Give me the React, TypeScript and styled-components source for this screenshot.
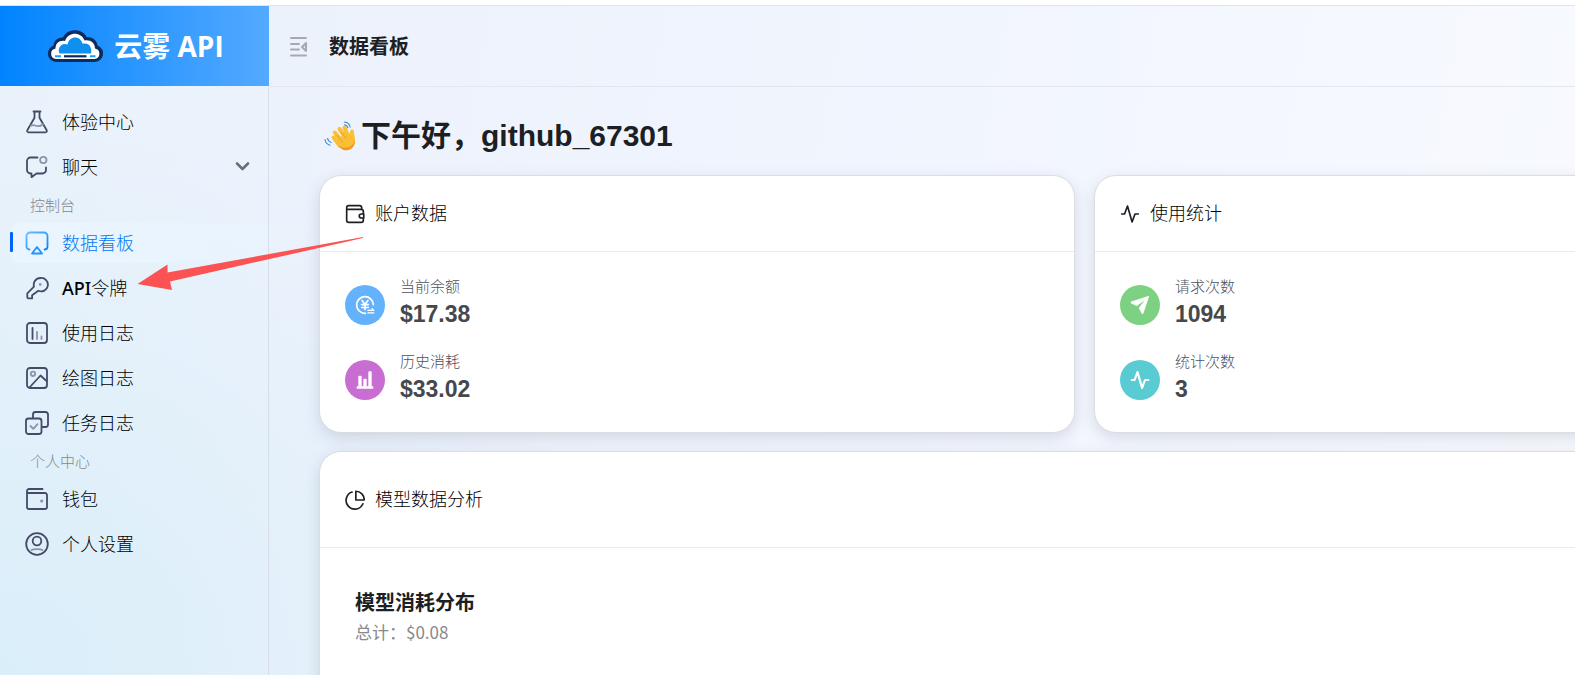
import React from "react";
import styled, { createGlobalStyle, css } from "styled-components";

const GlobalStyle = createGlobalStyle`
  * { box-sizing: border-box; }
  body {
    margin: 0;
    background: #fff;
    color: #1c1f23;
    font-family: "Noto Sans", "Noto Sans CJK SC", sans-serif;
    overflow: hidden;
  }
  h1, h2, h3, p, ul, dl, dd, dt { margin: 0; padding: 0; font-weight: inherit; }
`;

const Page = styled.div`
  position: relative;
  height: 100vh;
  display: grid;
  grid-template-columns: 269px minmax(0, 1fr);
  grid-template-rows: auto minmax(0, 1fr);
  border-top: 5px solid #fff;
  background:
    radial-gradient(ellipse 620px 560px at 0% 100%, #daeef9 0%, rgba(220, 238, 250, 0) 100%),
    linear-gradient(100deg, #e9f2fb 0%, #ebf2fc 16%, #eef2fc 24%, #f1f5fe 55%, #f8fafe 100%);
`;

const Brand = styled.a`
  display: flex;
  align-items: center;
  justify-content: center;
  align-self: start;
  gap: 11px;
  height: 81px;
  padding-left: 2px;
  border-top: 1px solid #dfe3ea;
  background: linear-gradient(90deg, #0084ff, #54a9ff);
  color: #fff;
  font-family: "Open Sans", "Noto Sans CJK SC", sans-serif;
  font-size: 28px;
  font-weight: 700;
  line-height: 36px;
  text-decoration: none;
`;

const TopBar = styled.header`
  display: flex;
  align-items: center;
  gap: 20px;
  height: 82px;
  padding: 1px 0 0 19px;
  border-top: 1px solid #dfe3ea;
  border-bottom: 1px solid #e3e6ef;
`;

const IconButton = styled.button`
  display: flex;
  padding: 0;
  border: 0;
  background: none;
  color: #a7a9b1;
`;

const TopTitle = styled.h1`
  font-size: 20px;
  font-weight: 700;
  line-height: 28px;
`;

const Sidebar = styled.nav`
  display: flex;
  flex-direction: column;
  gap: 5px;
  padding: 15px 0 20px 10px;
  border-right: 1px solid #d8dee9;
`;

const NavLabel = styled.div`
  height: 26px;
  padding: 2px 0 0 20px;
  color: #85888e;
  font-size: 15px;
  font-weight: 300;
  line-height: 22px;
`;

const NavItem = styled.a<{ $active?: boolean }>`
  position: relative;
  display: flex;
  align-items: center;
  gap: 13px;
  height: 40px;
  padding: 0 15px;
  border-radius: 10px 0 0 10px;
  color: #000;
  font-size: 18px;
  font-weight: 300;
  line-height: 24px;
  text-decoration: none;
  ${(p) => p.$active && css`
    background: linear-gradient(90deg, #eaf5ff, rgba(234, 245, 255, 0.5));
    color: #0077f5;
    &::before {
      content: "";
      position: absolute;
      left: 0;
      top: 9px;
      width: 3px;
      height: 20px;
      border-radius: 1px;
      background: #0064fa;
    }
  `}
`;

const NavText = styled.span`
  flex: 1;
`;

const Latin = styled.span`
  font-weight: 500;
`;

const Main = styled.main`
  overflow: hidden;
  padding: 26px 51px 0 50px;
`;

const Greeting = styled.h2`
  display: flex;
  align-items: center;
  gap: 5px;
  padding-left: 5px;
  margin-bottom: 16px;
  font-family: "Liberation Sans", "Noto Sans CJK SC", sans-serif;
  font-size: 30px;
  font-weight: 700;
  line-height: 46px;
`;

const Cards = styled.div`
  display: grid;
  grid-template-columns: repeat(2, 48vw);
  gap: 18px 19px;
`;

const Card = styled.section<{ $wide?: boolean }>`
  border: 1px solid #dadee3;
  border-radius: 22px;
  background: #fff;
  box-shadow: 0 5px 15px rgba(80, 90, 110, 0.18);
  ${(p) => p.$wide && css`
    grid-column: 1 / -1;
  `}
`;

const CardHeader = styled.div<{ $tall?: boolean }>`
  display: flex;
  align-items: center;
  gap: 10px;
  height: ${(p) => (p.$tall ? 96 : 76)}px;
  padding: 0 25px;
  border-bottom: 1px solid #e8eaec;
`;

const CardTitle = styled.h3`
  padding-bottom: 2px;
  color: #000;
  font-size: 18px;
  font-weight: 300;
  line-height: 24px;
`;

const Stats = styled.dl`
  display: flex;
  flex-direction: column;
  gap: 19px;
  padding: 23px 25px 26px;
`;

const Stat = styled.div`
  display: grid;
  grid-template-columns: 40px 1fr;
  column-gap: 15px;
`;

const Avatar = styled.span<{ $color: string }>`
  grid-row: 1 / 3;
  align-self: center;
  display: flex;
  align-items: center;
  justify-content: center;
  width: 40px;
  height: 40px;
  margin-top: 4px;
  border-radius: 50%;
  background: ${(p) => p.$color};
  color: #fff;
`;

const StatLabel = styled.dt`
  color: #4c525d;
  font-size: 15px;
  font-weight: 300;
  line-height: 22px;
`;

const StatValue = styled.dd`
  color: #45484c;
  font-family: "Liberation Sans", sans-serif;
  font-size: 23px;
  font-weight: 700;
  line-height: 34px;
`;

const Chart = styled.div`
  min-height: 400px;
  padding: 40px 35px;
`;

const ChartTitle = styled.h3`
  font-size: 20px;
  font-weight: 700;
  line-height: 30px;
`;

const ChartTotal = styled.p`
  color: #88898c;
  font-family: "Noto Sans CJK SC", sans-serif;
  font-size: 17px;
  line-height: 28px;
`;

const Pointer = styled.svg`
  position: absolute;
  left: 137px;
  top: 231px;
  pointer-events: none;
`;

type P = { children: React.ReactNode };

const NavIcon = ({ children }: P) => (
  <svg width="24" height="24" viewBox="0 0 24 24" fill="none" stroke="#454a66" strokeWidth="1.800" strokeLinecap="round" strokeLinejoin="round" aria-hidden="true">
    {children}
  </svg>
);

const SOFT = "#8b93a8";

const icons = {
  flask: (
    <NavIcon>
      <path d="M8.500 1.500h7M9.500 1.500v6.200L2.300 20.200c-.5 1 .1 2.100 1.200 2.100h17c1.100 0 1.700-1.100 1.200-2.100L14.500 7.700V1.500" />
      <path d="M5.500 16c2-1.800 4.500-.6 6.500 0s4-.2 6-1.800" stroke={SOFT} />
    </NavIcon>
  ),
  chat: (
    <NavIcon>
      <path d="M12.500 2.500H5.500A3.500 3.500 0 0 0 2 6v9a3.500 3.500 0 0 0 3.500 3.500H6.500v3.700l5-3.700h6a3.500 3.500 0 0 0 3.500-3.500V12.500" />
      <circle cx="18.300" cy="5" r="3.200" stroke={SOFT} />
    </NavIcon>
  ),
  board: (
    <NavIcon>
      <defs>
        <linearGradient id="boardStroke" x1="0" y1="0" x2="1" y2="1">
          <stop offset="0" stopColor="#6cbcff" />
          <stop offset="1" stopColor="#0084ff" />
        </linearGradient>
      </defs>
      <g stroke="url(#boardStroke)">
        <path d="M4.500 18.500a3 3 0 0 1-3-3v-10.500a3.500 3.500 0 0 1 3.500-3.500h14a3.500 3.500 0 0 1 3.500 3.500v10.500a3 3 0 0 1-3 3" />
      </g>
      <path d="M12 16l5 6.500H7z" stroke="#1f93ff" />
    </NavIcon>
  ),
  key: (
    <NavIcon>
      <path d="M15.500 2a6.700 6.700 0 0 0-6.500 8.600L2.300 17.300v3.900c0 .7.500 1.200 1.200 1.200h3.600v-3.200l6.200-4.500a6.700 6.700 0 1 0 2.200-12.700z" />
      <circle cx="15.200" cy="8.500" r="0.500" fill={SOFT} stroke={SOFT} />
    </NavIcon>
  ),
  log: (
    <NavIcon>
      <rect x="2" y="2" width="20" height="20" rx="3" />
      <path d="M7.500 7v11" />
      <path d="M12 11v7M16.500 15.500v2.500" stroke={SOFT} />
    </NavIcon>
  ),
  image: (
    <NavIcon>
      <rect x="2" y="2" width="20" height="20" rx="3" />
      <path d="M4.500 21.500L15.500 9.500 21.500 15" />
      <circle cx="8" cy="7.800" r="2.200" stroke={SOFT} />
    </NavIcon>
  ),
  task: (
    <NavIcon>
      <path d="M8 7V3.500A2.500 2.500 0 0 1 10.500 1h10A2.500 2.500 0 0 1 23 3.500v10a2.500 2.500 0 0 1-2.500 2.500H17" />
      <rect x="1" y="7.500" width="15.500" height="15.500" rx="2.500" />
      <path d="M5.500 15l2.800 2.800 4.200-4.600" stroke={SOFT} />
    </NavIcon>
  ),
  wallet: (
    <NavIcon>
      <path d="M17.500 2H4A2 2 0 0 0 2 4v16a2 2 0 0 0 2 2h16a2 2 0 0 0 2-2V8a2 2 0 0 0-2-2H2.500" />
      <circle cx="16.700" cy="14" r="0.700" fill={SOFT} stroke={SOFT} />
    </NavIcon>
  ),
  user: (
    <NavIcon>
      <circle cx="12" cy="12" r="10.800" />
      <circle cx="12" cy="9" r="4.300" />
      <path d="M6.500 18c2-1.300 9-1.300 11 0" stroke={SOFT} />
    </NavIcon>
  ),
};

const Logo = () => (
  <svg width="56" height="33" viewBox="0 0 56 33" aria-hidden="true">
    <path d="M9 32a8.500 8.500 0 0 1-2.500-16.500C7 10 11.500 7 16 7.500 20-1.500 35-2.500 39.500 7c6-.5 10.500 3.200 11 8.500A8.500 8.500 0 0 1 47.500 32z" fill="#0c2c5e" />
    <path d="M9 29a5.300 5.300 0 0 1-.5-10.500C8.500 12.500 13 9.800 18 11 21.500 1.500 34 1.500 37.500 10.500c6-1 10.500 2.500 10.500 8A5.300 5.300 0 0 1 47.500 29z" fill="#fff" />
    <path d="M12.500 23.500c-2.500-6 2.500-11.500 8-9C22 5.500 33.500 5 35.500 13.700c6.500-1.700 10 4 8.500 9.800z" fill="#0f8fee" />
    <path d="M8 26.300h6M43 26.300h5.500" stroke="#1f9cf5" strokeWidth="2" />
    <path d="M17 26.300h22.500" stroke="#0c2c5e" strokeWidth="2.200" />
  </svg>
);

const CollapseIcon = () => (
  <svg width="21" height="22" viewBox="0 0 21 22" fill="none" stroke="currentColor" strokeWidth="2" strokeLinecap="round" strokeLinejoin="round" aria-hidden="true">
    <path d="M3 2h15M3 8h8M3 13.500h8M3 19.500h15" />
    <path d="M18 7v8l-4-4z" />
  </svg>
);

const Chevron = () => (
  <svg width="20" height="20" viewBox="0 0 20 20" fill="none" stroke="#6b6f78" strokeWidth="2.600" strokeLinecap="round" strokeLinejoin="round" aria-hidden="true">
    <path d="M4 6.500l5.500 5.500L15 6.500" />
  </svg>
);

const Wave = () => (
  <svg width="32" height="32" viewBox="0 0 32 32" fill="none" aria-hidden="true">
    <path d="M9.500 17.500L16 26M10.800 12.500l8 10M15.500 9l7 10M20.500 7.500l4.500 11" stroke="#fbbf35" strokeWidth="4" strokeLinecap="round" />
    <path d="M11.500 20L23 12.500c1.500-.5 1.700 1 2.200 1.800.8-1.300.5-3.300 2-4.500 1.200-1 2.800 0 2.600 1.500-.2 2.700 1.500 5 1.200 10C30.500 28 25 31 20 30c-3.500-1-6-5-8.500-10z" fill="#fbbf35" />
    <path d="M31 20c.3 7-5 11.500-11 10-2.500-.7-4.200-2.800-6-5 6 4 14 4 17-5z" fill="#f09a1f" />
    <path d="M12.500 15l6 7M17.500 12.500l4.500 6" stroke="#e79a1c" strokeWidth="0.800" strokeLinecap="round" />
    <path d="M20.500 2c3 .2 5 2 5.700 5M20.500 4.800c1.700.3 2.800 1.300 3.400 3M1 19.500c.5 3 2.200 5 5 5.700M3.500 18.500c.5 2 1.600 3.300 3.600 4" stroke="#2f86cf" strokeWidth="1.100" strokeLinecap="round" />
  </svg>
);

const LineIcon = ({ children }: P) => (
  <svg width="20" height="20" viewBox="0 0 24 24" fill="none" stroke="currentColor" strokeWidth="2" strokeLinecap="round" strokeLinejoin="round" aria-hidden="true">
    {children}
  </svg>
);

const pulse = <path d="M2 12h3.500L9 2.500l5.500 19L18 12h4" />;

const YenIcon = () => (
  <LineIcon>
    <path d="M22 11.500A10 10 0 1 0 12.500 22" />
    <path d="M8.500 6.500l3.500 4.500 3.500-4.500M8 11.500h8M8 15h8M12 11v6.500" />
    <path d="M15.500 18.500h7l-2-2M22.500 21.500h-7" strokeWidth="1.600" />
  </LineIcon>
);

const BarsIcon = () => (
  <svg width="20" height="20" viewBox="0 0 24 24" fill="currentColor" aria-hidden="true">
    <path d="M4 8a1 1 0 0 1 1-1h2a1 1 0 0 1 1 1v12H4zM10 11.500a1 1 0 0 1 1-1h2a1 1 0 0 1 1 1V20h-4zM16 2.500a1 1 0 0 1 1-1h2a1 1 0 0 1 1 1V20h-4z" />
    <rect x="2" y="19.500" width="20" height="3" rx="1" />
  </svg>
);

const SendIcon = () => (
  <svg width="20" height="20" viewBox="0 0 24 24" fill="currentColor" aria-hidden="true">
    <path d="M21.700 1.300L1.700 7.800c-1 .4-1.200 1.600-.3 2.300l6.700 3L17.500 6.500 10.500 15.500l3.500 6.700c.6.900 1.700.8 2.100-.2L22.700 2.500c.3-.8-.2-1.500-1-1.200z" />
  </svg>
);

type Item = { icon: keyof typeof icons; text: React.ReactNode; active?: boolean; expandable?: boolean };

const groups: { label?: string; items: Item[] }[] = [
  { items: [{ icon: "flask", text: "体验中心" }, { icon: "chat", text: "聊天", expandable: true }] },
  {
    label: "控制台",
    items: [
      { icon: "board", text: "数据看板", active: true },
      { icon: "key", text: <><Latin>API</Latin>令牌</> },
      { icon: "log", text: "使用日志" },
      { icon: "image", text: "绘图日志" },
      { icon: "task", text: "任务日志" },
    ],
  },
  { label: "个人中心", items: [{ icon: "wallet", text: "钱包" }, { icon: "user", text: "个人设置" }] },
];

type StatData = { label: string; value: string; color: string; icon: React.ReactNode };

const account: StatData[] = [
  { label: "当前余额", value: "$17.38", color: "#65b2fc", icon: <YenIcon /> },
  { label: "历史消耗", value: "$33.02", color: "#c86dd2", icon: <BarsIcon /> },
];

const usage: StatData[] = [
  { label: "请求次数", value: "1094", color: "#7dd182", icon: <SendIcon /> },
  { label: "统计次数", value: "3", color: "#59cbd3", icon: <LineIcon><g strokeWidth="2.600">{pulse}</g></LineIcon> },
];

const StatList = ({ data }: { data: StatData[] }) => (
  <Stats>
    {data.map((s) => (
      <Stat key={s.label}>
        <Avatar $color={s.color}>{s.icon}</Avatar>
        <StatLabel>{s.label}</StatLabel>
        <StatValue>{s.value}</StatValue>
      </Stat>
    ))}
  </Stats>
);

export default function App() {
  return (
    <>
      <GlobalStyle />
      <Page>
        <Brand href="#"><Logo />云雾 API</Brand>
        <TopBar>
          <IconButton aria-label="收起侧边栏"><CollapseIcon /></IconButton>
          <TopTitle>数据看板</TopTitle>
        </TopBar>
        <Sidebar>
          {groups.map((g, i) => (
            <React.Fragment key={i}>
              {g.label && <NavLabel>{g.label}</NavLabel>}
              {g.items.map((it) => (
                <NavItem key={it.icon} href="#" $active={it.active}>
                  {icons[it.icon]}
                  <NavText>{it.text}</NavText>
                  {it.expandable && <Chevron />}
                </NavItem>
              ))}
            </React.Fragment>
          ))}
        </Sidebar>
        <Main>
          <Greeting><Wave />下午好，github_67301</Greeting>
          <Cards>
            <Card>
              <CardHeader>
                <LineIcon>
                  <path d="M20 6.500V4.500A2.500 2.500 0 0 0 17.500 2H4.500A2.500 2.500 0 0 0 2 4.500v15A2.500 2.500 0 0 0 4.500 22h15a2.500 2.500 0 0 0 2.500-2.500V17M2.500 6.500h17A2.500 2.500 0 0 1 22 9v2.500" />
                  <path d="M22.500 12h-3a2.400 2.400 0 0 0 0 4.800h3z" />
                </LineIcon>
                <CardTitle>账户数据</CardTitle>
              </CardHeader>
              <StatList data={account} />
            </Card>
            <Card>
              <CardHeader>
                <LineIcon>{pulse}</LineIcon>
                <CardTitle>使用统计</CardTitle>
              </CardHeader>
              <StatList data={usage} />
            </Card>
            <Card $wide>
              <CardHeader $tall>
                <LineIcon>
                  <path d="M8.500 2.500A10.500 10.500 0 1 0 21.500 16.500" />
                  <path d="M13 1.500v10.500h10A10 10 0 0 0 13 1.500z" />
                </LineIcon>
                <CardTitle>模型数据分析</CardTitle>
              </CardHeader>
              <Chart>
                <ChartTitle>模型消耗分布</ChartTitle>
                <ChartTotal>总计：$0.08</ChartTotal>
              </Chart>
            </Card>
          </Cards>
        </Main>
        <Pointer width="228" height="62" viewBox="0 0 228 62" aria-hidden="true">
          <path d="M0.500 48L30.500 28.500V36.500L226 1v1L33 45.500l2 8.500z" fill="#fb5353" />
        </Pointer>
      </Page>
    </>
  );
}
